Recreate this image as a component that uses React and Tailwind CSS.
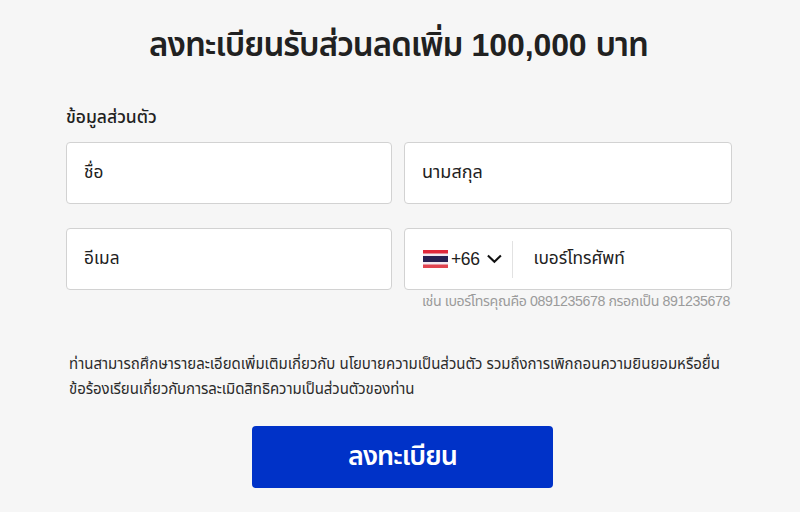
const field =
  "flex h-[62px] items-center rounded-[4px] border border-[#d2d2d2] bg-white text-[17.3px] text-[#212121]";

function ThaiFlag() {
  return (
    <svg width="25" height="18" viewBox="0 0 25 18" className="shrink-0">
      <rect width="25" height="18" fill="#f3e9f1" />
      <rect width="25" height="3.5" fill="#e0283a" />
      <rect y="6" width="25" height="6" fill="#272052" />
      <rect y="14.5" width="25" height="3.5" fill="#e04450" />
    </svg>
  );
}

function ChevronDown() {
  return (
    <svg width="15" height="10" viewBox="0 0 15 10" fill="none" className="ml-[7px] shrink-0">
      <path d="M0.9 1.6 L7.4 7.8 L13.9 1.6" stroke="#111" strokeWidth="2.1" />
    </svg>
  );
}

export default function App() {
  return (
    <main className="h-[512px] w-[800px] overflow-hidden bg-[#f6f6f6] font-['Liberation_Sans','Noto_Sans_Thai',sans-serif] whitespace-nowrap text-[#212121]">
      <h1 className="flex h-[90px] items-center justify-center gap-[9px] pr-[3px] text-[33px] leading-[50px] font-semibold tracking-[-1px]">
        <span>ลงทะเบียนรับส่วนลดเพิ่ม</span>
        <span className="text-[32px] tracking-[-0.1px]">100,000</span>
        <span>บาท</span>
      </h1>

      <form className="ml-[66px] w-[666px]">
        <h2 className="mt-[15px] h-[37px] text-[17.5px] leading-[24px] font-medium">ข้อมูลส่วนตัว</h2>
        <div className="grid grid-cols-[326px_328px] gap-x-[12px] gap-y-[24px]">
          <div className={field + " px-[17px]"}>ชื่อ</div>
          <div className={field + " px-[17px] pb-[2px]"}>
            <span className="text-[18px]">นามสกุล</span>
          </div>
          <div className={field + " px-[17px]"}>อีเมล</div>
          <div className={field + " pl-[18px]"}>
            <ThaiFlag />
            <span className="ml-[3px] text-[17.5px] tracking-[-0.4px]">+66</span>
            <ChevronDown />
            <span className="ml-[10px] h-[37px] w-px bg-[#e2e2e2]" />
            <span className="ml-[21px]">เบอร์โทรศัพท์</span>
          </div>
        </div>
        <p className="h-[61px] pr-[2px] text-right text-[14.2px] leading-[23px] tracking-[-0.4px] text-[#9b9b9b]">
          เช่น เบอร์โทรคุณคือ 0891235678 กรอกเป็น 891235678
        </p>
        <p className="ml-[3px] text-[15px] leading-[25px] text-[#2b2b2b]">
          ท่านสามารถศึกษารายละเอียดเพิ่มเติมเกี่ยวกับ นโยบายความเป็นส่วนตัว รวมถึงการเพิกถอนความยินยอมหรือยื่น
          <br />
          <span className="tracking-[-0.08px]">ข้อร้องเรียนเกี่ยวกับการละเมิดสิทธิความเป็นส่วนตัวของท่าน</span>
        </p>
        <button
          type="button"
          className="mt-[25px] ml-[186px] flex h-[62px] w-[301px] items-center justify-center rounded-[4px] bg-[#0032c8] pb-[2px] text-[27px] font-semibold tracking-[-0.9px] text-white"
        >
          ลงทะเบียน
        </button>
      </form>
    </main>
  );
}
